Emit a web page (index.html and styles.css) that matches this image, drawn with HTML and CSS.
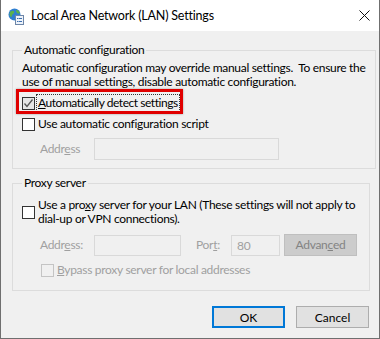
FILE: index.html
```html
<!DOCTYPE html>
<html lang="en">
<head>
  <meta charset="UTF-8">
  <title>Local Area Network (LAN) Settings</title>
  <link rel="stylesheet" href="styles.css">
</head>
<body>

<div class="window">
  <!-- Title bar -->
  <div class="titlebar">
    <svg class="app-icon" width="16" height="17" viewBox="0 0 16 17">
      <circle cx="6.5" cy="6.5" r="6" fill="#2f7fd0"/>
      <path d="M2 4 Q4 2 6 3 Q7 5 5 6 Q3 7 4 9 Q2 9 1.5 7 Z" fill="#5cb24a"/>
      <path d="M8 2 Q11 2 12 5 Q10 6 9 5 Q8 4 8 2 Z" fill="#5cb24a"/>
      <rect x="7.5" y="7.5" width="8" height="9" fill="#eef3fa" stroke="#6d86a8"/>
      <rect x="9" y="10" width="1.5" height="1" fill="#3d6fb0"/>
      <rect x="11" y="10" width="3" height="1" fill="#3d6fb0"/>
      <rect x="9" y="13" width="1.5" height="1" fill="#3d6fb0"/>
      <rect x="11" y="13" width="3" height="1" fill="#3d6fb0"/>
    </svg>
    <span class="title">Local Area Network (LAN) Settings</span>
    <svg class="close" width="11" height="11" viewBox="0 0 11 11">
      <path d="M0.5 0.5 L10.5 10.5 M10.5 0.5 L0.5 10.5" stroke="#111" stroke-width="1"/>
    </svg>
  </div>

  <div class="content">
    <fieldset class="group group-auto">
      <legend>Automatic configuration</legend>
      <p class="note">Automatic configuration may override manual settings.&nbsp; To ensure the<br>use of manual settings, disable automatic configuration.</p>

      <div class="check-row row-detect">
        <span class="box checked">
          <svg width="11" height="11" viewBox="0 0 11 11"><path d="M1.5 5.5 L4 8.5 L9.5 1.5" fill="none" stroke="#555" stroke-width="1.3"/></svg>
        </span>
        <span class="focus"><u>A</u>utomatically detect settings</span>
        <span class="highlight"></span>
      </div>

      <div class="check-row">
        <span class="box"></span>
        <span>Use automatic configuration script</span>
      </div>

      <div class="field-row script-row">
        <span class="label disabled">Addr<u>e</u>ss</span>
        <span class="input input-script"></span>
      </div>
    </fieldset>

    <fieldset class="group group-proxy">
      <legend>Proxy server</legend>

      <div class="check-row row-proxy">
        <span class="box"></span>
        <span>Use a pro<u>x</u>y server for your LAN (These settings will not apply to<br>dial-up or VPN connections).</span>
      </div>

      <div class="field-row proxy-row">
        <span class="label disabled">Addr<u>e</u>ss:</span>
        <span class="input input-address"></span>
        <span class="label disabled port-label">Por<u>t</u>:</span>
        <span class="input input-port">80</span>
        <span class="btn btn-disabled">Advan<u>c</u>ed</span>
      </div>

      <div class="check-row row-bypass">
        <span class="box box-disabled"></span>
        <span class="disabled"><u>B</u>ypass proxy server for local addresses</span>
      </div>
    </fieldset>

    <div class="actions">
      <span class="btn btn-default">OK</span>
      <span class="btn">Cancel</span>
    </div>
  </div>
</div>

</body>
</html>
```

FILE: styles.css
```css
body {
  margin: 0;
  font-family: Lato, "Noto Sans", sans-serif;
  font-size: 12px;
  color: #000;
  background: #fff;
}

.window {
  width: 378px;
  height: 338px;
  border: 1px solid #6f6f6f;
  border-top: none;
  background: #f0f0f0;
  display: flex;
  flex-direction: column;
}

.titlebar {
  height: 31px;
  background: #fff;
  display: flex;
  align-items: center;
  padding-left: 7px;
  padding-right: 9px;
}

.app-icon {
  margin-right: 7px;
  margin-top: 2px;
}

.title {
  flex: 1;
  font-size: 12.5px;
  letter-spacing: -0.2px;
  line-height: 14px;
}

.content {
  padding: 12px 9px 0 11px;
}

.group {
  margin: 0;
  border: 1px solid #dcdcdc;
  padding: 3px 9px 8px 9px;
  line-height: 14px;
  white-space: nowrap;
  letter-spacing: -0.3px;
}

.group legend {
  padding: 0 2px;
  margin-left: 0;
  line-height: 14px;
}

.group-proxy {
  margin-top: 7px;
  padding-top: 8px;
  padding-bottom: 13px;
}

.note {
  margin: 0;
  padding-top: 1px;
}

.check-row {
  display: flex;
  align-items: center;
  gap: 3px;
  margin-top: 7px;
  position: relative;
}

.box {
  width: 11px;
  height: 11px;
  border: 1px solid #333;
  background: #fff;
  flex: none;
  display: flex;
  align-items: center;
  justify-content: center;
}

.box.checked {
  background: #e5e5e5;
}

.box-disabled {
  border-color: #c4c4c4;
  background: #f0f0f0;
}

.focus {
  outline: 1px dotted #333;
  outline-offset: 1px;
  letter-spacing: -0.45px;
}

.highlight {
  position: absolute;
  left: -6px;
  top: -7px;
  width: 161px;
  height: 19px;
  border: 3px solid #e00000;
  box-shadow: 0 0 2px rgba(0,0,0,0.35);
  pointer-events: none;
}

.group .row-proxy {
  margin-top: 0;
}

.row-bypass {
  margin-left: 19px;
}

.disabled {
  color: #a0a0a0;
}

.field-row {
  display: flex;
  align-items: center;
  margin-top: 7px;
}

.label {
  width: 54px;
  padding-left: 18px;
}

.input {
  height: 19px;
  border: 1px solid #d9d9d9;
  background: #f0f0f0;
  box-sizing: content-box;
  color: #a0a0a0;
  line-height: 19px;
  padding-left: 5px;
}

.input-script {
  width: 178px;
  height: 20px;
}

.proxy-row {
  margin-top: 8px;
}

.input-address {
  width: 80px;
}

.port-label {
  width: 35px;
  padding-left: 15px;
}

.input-port {
  width: 42px;
}

.btn {
  width: 71px;
  height: 20px;
  border: 1px solid #adadad;
  background: #e1e1e1;
  display: flex;
  align-items: center;
  justify-content: center;
}

.btn-disabled {
  margin-left: 4px;
  border-color: #bfbfbf;
  background: #cccccc;
  color: #838383;
}

.actions {
  display: flex;
  justify-content: flex-end;
  gap: 11px;
  margin-top: 15px;
  padding-right: 1px;
}

.btn-default {
  border: 2px solid #0078d7;
  width: 69px;
  height: 18px;
}
```
